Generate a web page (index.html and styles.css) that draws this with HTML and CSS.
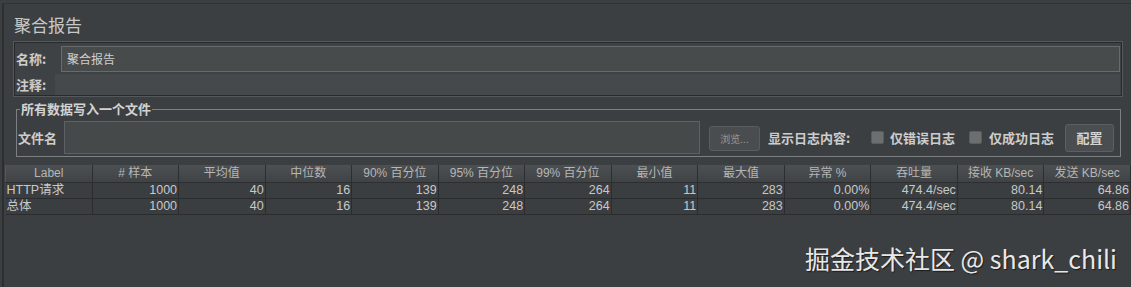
FILE: index.html
```html
<!DOCTYPE html>
<html lang="zh-CN">
<head>
    <meta charset="UTF-8">
    <title>聚合报告</title>
    <link rel="stylesheet" href="styles.css">
</head>
<body>
    <div class="frame">
        <div class="panel">
            <h1 class="title">聚合报告</h1>

            <div class="namebox">
                <div class="row">
                    <span class="lbl">名称:</span>
                    <div class="field">聚合报告</div>
                </div>
                <div class="row">
                    <span class="lbl">注释:</span>
                    <div class="comment"></div>
                </div>
            </div>

            <fieldset class="filebox">
                <legend>所有数据写入一个文件</legend>
                <div class="filerow">
                    <span class="lbl filename">文件名</span>
                    <div class="fileinput"></div>
                    <button class="browse">浏览...</button>
                    <span class="lbl logs">显示日志内容:</span>
                    <span class="check first"></span>
                    <span class="lbl">仅错误日志</span>
                    <span class="check"></span>
                    <span class="lbl">仅成功日志</span>
                    <button class="config">配置</button>
                </div>
            </fieldset>
        </div>

        <table class="results">
            <thead>
                <tr>
                    <th>Label</th>
                    <th># 样本</th>
                    <th>平均值</th>
                    <th>中位数</th>
                    <th>90% 百分位</th>
                    <th>95% 百分位</th>
                    <th>99% 百分位</th>
                    <th>最小值</th>
                    <th>最大值</th>
                    <th>异常 %</th>
                    <th>吞吐量</th>
                    <th>接收 KB/sec</th>
                    <th>发送 KB/sec</th>
                </tr>
            </thead>
            <tbody>
                <tr>
                    <td class="name">HTTP请求</td>
                    <td>1000</td><td>40</td><td>16</td><td>139</td><td>248</td><td>264</td>
                    <td>11</td><td>283</td><td>0.00%</td><td>474.4/sec</td><td>80.14</td><td>64.86</td>
                </tr>
                <tr>
                    <td class="name">总体</td>
                    <td>1000</td><td>40</td><td>16</td><td>139</td><td>248</td><td>264</td>
                    <td>11</td><td>283</td><td>0.00%</td><td>474.4/sec</td><td>80.14</td><td>64.86</td>
                </tr>
            </tbody>
        </table>

        <div class="watermark">掘金技术社区 @ shark_chili</div>
    </div>
</body>
</html>
```

FILE: styles.css
```css
html, body {
    margin: 0;
    height: 100%;
    background: #3c3f41;
    overflow: hidden;
}

body {
    font-family: "Liberation Sans", "Noto Sans CJK SC", sans-serif;
    font-size: 12px;
    color: #c4c4c4;
}

.frame {
    position: relative;
    height: 284px;
    margin: 3px 0 0 2px;
    border-top: 1px solid #303234;
    border-left: 2px solid #2c2e30;
    padding-left: 1px;
}

.panel {
    padding: 0 0 0 9px;
}

.title {
    margin: 0;
    padding: 11px 0 0 0;
    box-sizing: border-box;
    height: 38px;
    font-family: "Noto Sans CJK SC", sans-serif;
    font-size: 17px;
    font-weight: normal;
    line-height: 20px;
    color: #c8c8c8;
}

.lbl {
    font-family: "Noto Sans CJK SC", sans-serif;
    font-weight: bold;
    font-size: 13px;
    line-height: 16px;
    color: #cdcdcd;
    white-space: nowrap;
}

/* name / comment box */
.namebox {
    box-sizing: border-box;
    width: 1108px;
    height: 54px;
    border: 1px solid #282a2c;
    box-shadow: 0 0 0 1px #56595b;
    background: #3f4244;
    padding: 3px 1px 0 0;
}

.namebox .row {
    display: flex;
    align-items: center;
}

.namebox .row .lbl {
    width: 45px;
    padding-left: 1px;
}

.field {
    flex: 1;
    box-sizing: border-box;
    height: 26px;
    line-height: 24px;
    padding-left: 5px;
    background: #484b4c;
    border: 1px solid #686b6d;
    font-family: "Noto Sans CJK SC", sans-serif;
    font-size: 12px;
    color: #cfcfcf;
}

.comment {
    flex: 1;
    height: 21px;
    margin-top: 2px;
    margin-left: -6px;
    background: #46494b;
}

.namebox .row:last-child .lbl {
    padding-top: 3px;
}

/* file fieldset */
.filebox {
    box-sizing: border-box;
    width: 1105px;
    margin: 6px 0 0 2px;
    border: 1px solid #7d8082;
    padding: 0 0 2px 0;
}

.filebox legend {
    font-family: "Noto Sans CJK SC", sans-serif;
    font-weight: bold;
    font-size: 13px;
    line-height: 14px;
    color: #d2d2d2;
    padding: 0 1px;
    margin-left: 3px;
}

.filerow {
    display: flex;
    align-items: center;
    margin-top: 5px;
}

.filename {
    width: 39px;
    padding-left: 1px;
    margin-right: 7px;
}

.fileinput {
    box-sizing: border-box;
    width: 636px;
    height: 33px;
    background: #45494a;
    border: 1px solid #5e6163;
}

.browse {
    box-sizing: border-box;
    width: 51px;
    height: 25px;
    margin: 2px 8px 0 9px;
    padding: 0;
    background: #4a4d4f;
    border: 1px solid #5a5d5f;
    border-radius: 3px;
    font-family: "Noto Sans CJK SC", sans-serif;
    font-size: 10px;
    color: #989898;
}

.logs {
    width: 82px;
}

.check {
    box-sizing: border-box;
    width: 13px;
    height: 13px;
    margin: 0 7px 0 14px;
    background: #6c6f70;
    border: 1px solid #5a5d5e;
    border-radius: 2px;
}

.check.first {
    margin-left: 21px;
    margin-right: 6px;
}

.config {
    box-sizing: border-box;
    width: 49px;
    height: 28px;
    margin-left: 11px;
    padding: 0;
    background: #4b4e50;
    border: 1px solid #5c5f61;
    border-radius: 3px;
    font-family: "Noto Sans CJK SC", sans-serif;
    font-weight: bold;
    font-size: 13px;
    color: #d4d4d4;
}

/* results table */
.results {
    margin-top: 8px;
    width: 1126px;
    table-layout: fixed;
    border-collapse: collapse;
}

.results th {
    height: 17px;
    padding: 0;
    font-weight: normal;
    font-size: 12px;
    line-height: 17px;
    color: #b6b6b6;
    background: linear-gradient(#4d5052, #404345);
    border-right: 1px solid #2c2e30;
    border-left: 1px solid #55585a;
    border-bottom: 1px solid #2c2e30;
    text-align: center;
    white-space: nowrap;
}

.results td {
    height: 15px;
    padding: 0 1px 0 0;
    font-size: 12.5px;
    line-height: 15px;
    color: #c8c8c8;
    text-align: right;
    border-right: 1px solid #2a2c2e;
    border-bottom: 1px solid #2a2c2e;
    background: #3b3e40;
    white-space: nowrap;
}

.results td.name {
    text-align: left;
    padding-left: 1px;
}

.watermark {
    position: absolute;
    right: 14px;
    bottom: 15px;
    font-family: "Noto Sans CJK SC", sans-serif;
    font-size: 25px;
    line-height: 30px;
    color: #e8e8e8;
    text-shadow: 1px 1px 1px #1c1c1c;
}
```
